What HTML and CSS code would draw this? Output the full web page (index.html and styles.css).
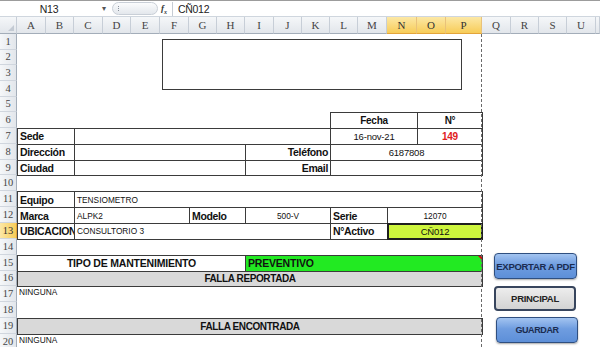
FILE: index.html
```html
<!DOCTYPE html>
<html lang="es">
<head>
<meta charset="utf-8">
<title>Hoja de mantenimiento</title>
<link rel="stylesheet" href="styles.css">
</head>
<body>
<div class="fbar">
  <div class="namebox">N13</div>
  <div class="nb-arrow">&#9662;</div>
  <div class="pill"><span class="grip"></span></div>
  <div class="fx">f<sub>x</sub></div>
  <div class="fsep"></div>
  <div class="formula">CÑ012</div>
</div>
<div class="sheet">
  <div class="ch corner"><span class="tri"></span></div>
  <div class="ch">A</div><div class="ch">B</div><div class="ch">C</div><div class="ch">D</div>
  <div class="ch">E</div><div class="ch">F</div><div class="ch">G</div><div class="ch">H</div>
  <div class="ch">I</div><div class="ch">J</div><div class="ch">K</div><div class="ch">L</div>
  <div class="ch">M</div><div class="ch hl">N</div><div class="ch hl">O</div><div class="ch hl">P</div>
  <div class="ch">Q</div><div class="ch">R</div><div class="ch">S</div><div class="ch">U</div>
  <div class="ch"></div>

  <div class="rh r1">1</div><div class="rh r2">2</div><div class="rh r3">3</div><div class="rh r4">4</div>
  <div class="rh r5">5</div><div class="rh r6">6</div><div class="rh r7">7</div><div class="rh r8">8</div>
  <div class="rh r9">9</div><div class="rh r10">10</div><div class="rh r11">11</div><div class="rh r12">12</div>
  <div class="rh r13 hl">13</div><div class="rh r14">14</div><div class="rh r15">15</div><div class="rh r16">16</div>
  <div class="rh r17">17</div><div class="rh r18">18</div><div class="rh r19">19</div><div class="rh r20">20</div>

  <div class="c b r6 cLN ctr lbl sm">Fecha</div>
  <div class="c b r6 cOP ctr lbl sm">N°</div>

  <div class="c b r7 cAB lbl">Sede</div>
  <div class="c b r7 cCK"></div>
  <div class="c b r7 cLN ctr val">16-nov-21</div>
  <div class="c b r7 cOP ctr lbl sm red">149</div>

  <div class="c b r8 cAB lbl">Dirección</div>
  <div class="c b r8 cCH"></div>
  <div class="c b r8 cIK rt lbl">Teléfono</div>
  <div class="c b r8 cLP ctr val">6187808</div>

  <div class="c b r9 cAB lbl">Ciudad</div>
  <div class="c b r9 cCH"></div>
  <div class="c b r9 cIK rt lbl">Email</div>
  <div class="c b r9 cLP"></div>

  <div class="c b r11 cAB lbl">Equipo</div>
  <div class="c b r11 cCP data">TENSIOMETRO</div>

  <div class="c b r12 cAB lbl">Marca</div>
  <div class="c b r12 cCF data">ALPK2</div>
  <div class="c b r12 cGH lbl">Modelo</div>
  <div class="c b r12 cIK ctr data">500-V</div>
  <div class="c b r12 cLM lbl">Serie</div>
  <div class="c b r12 cNP ctr data">12070</div>

  <div class="c b r13 cAB lbl">UBICACION</div>
  <div class="c b r13 cCK data">CONSULTORIO 3</div>
  <div class="c b r13 cLM lbl">N°Activo</div>
  <div class="c b r13 cNP ctr val lime sel">CÑ012</div>

  <div class="c b r15 cAH ctr lbl big">TIPO DE MANTENIMIENTO</div>
  <div class="c b r15 cIP lbl big green">PREVENTIVO</div>

  <div class="c b r16 cAP ctr lbl head gray">FALLA REPORTADA</div>
  <div class="c r17 cAP data top">NINGUNA</div>
  <div class="c b r19 cAP ctr lbl head gray">FALLA ENCONTRADA</div>
  <div class="c r20 cAP data top">NINGUNA</div>

  <div class="logo"></div>
  <div class="pb"></div>

  <button class="btn blue export" type="button">EXPORTAR A PDF</button>
  <button class="btn principal" type="button">PRINCIPAL</button>
  <button class="btn blue guardar" type="button">GUARDAR</button>
</div>
</body>
</html>
```
FILE: styles.css
```css
* { box-sizing: border-box; margin: 0; padding: 0; }
html, body { width: 600px; height: 347px; overflow: hidden; background: #fff; }
body { font-family: "Liberation Sans", Arial, sans-serif; color: #111; }

/* formula bar */
.fbar { height: 17px; display: flex; align-items: center; border-top: 1px solid #9c9c9c; border-bottom: 1px solid #cfd6de; background: #fff; }
.namebox { width: 98px; text-align: center; font-size: 10.5px; letter-spacing: -0.3px; color: #222; }
.nb-arrow { width: 12px; font-size: 8px; color: #555; text-align: center; }
.pill { width: 46px; height: 13px; margin-left: 2px; border: 1px solid #c9cfd7; border-radius: 7px; background: linear-gradient(#fbfcfd, #e3e7ec); display: flex; align-items: center; padding-left: 5px; }
.grip { width: 2px; height: 5px; border-left: 1px dotted #8a929c; }
.fx { width: 12px; font: italic bold 9px "Liberation Serif", serif; color: #333; text-align: center; }
.fx sub { font-size: 6px; }
.fsep { width: 1px; height: 14px; background: #c6ccd4; margin: 0 5px 0 2px; }
.formula { font-size: 10.5px; letter-spacing: -0.3px; color: #222; }

/* sheet grid */
.sheet {
  position: relative;
  display: grid;
  grid-template-columns: 17px 29px 28px 29px 28px 29px 29px 28px 28px 29px 28px 28px 28px 29px 30px 29px 36px 29px 28px 28px 29px 1fr;
  grid-template-rows: 17px repeat(6, 15.67px) repeat(14, 15.85px);
  height: 330px;
  overflow: hidden;
}
.ch { grid-row: 1; display: flex; align-items: center; justify-content: center; background: linear-gradient(#f5f7f9, #e2e6eb); border-right: 1px solid #c7ced7; border-bottom: 1px solid #a3adb9; font: 11px "Liberation Serif", serif; color: #444; }
.ch.hl { background: linear-gradient(#fce8a6, #f7cc58); border-bottom-color: #e3a43a; border-right-color: #e9c27a; color: #333; }
.corner { position: relative; }
.tri { position: absolute; right: 2px; bottom: 2px; border-bottom: 6px solid #c3cad3; border-left: 6px solid transparent; }
.rh { grid-column: 1; display: flex; align-items: center; justify-content: center; background: linear-gradient(90deg, #f5f7f9, #e2e6eb); border-right: 1px solid #a3adb9; border-bottom: 1px solid #d0d6de; font: 10.5px "Liberation Serif", serif; color: #454545; }
.rh.hl { background: linear-gradient(90deg, #fce8a6, #f7cc58); border-right-color: #e3a43a; color: #333; }

.r1 { grid-row: 2; } .r2 { grid-row: 3; } .r3 { grid-row: 4; } .r4 { grid-row: 5; }
.r5 { grid-row: 6; } .r6 { grid-row: 7; } .r7 { grid-row: 8; } .r8 { grid-row: 9; }
.r9 { grid-row: 10; } .r10 { grid-row: 11; } .r11 { grid-row: 12; } .r12 { grid-row: 13; }
.r13 { grid-row: 14; } .r14 { grid-row: 15; } .r15 { grid-row: 16; } .r16 { grid-row: 17; }
.r17 { grid-row: 18; } .r18 { grid-row: 19; } .r19 { grid-row: 20; } .r20 { grid-row: 21; }

.cAB { grid-column: 2 / 4; }
.cCK { grid-column: 4 / 13; }
.cLN { grid-column: 13 / 16; }
.cOP { grid-column: 16 / 18; }
.cCH { grid-column: 4 / 10; }
.cIK { grid-column: 10 / 13; }
.cLP { grid-column: 13 / 18; }
.cCP { grid-column: 4 / 18; }
.cCF { grid-column: 4 / 8; }
.cGH { grid-column: 8 / 10; }
.cLM { grid-column: 13 / 15; }
.cNP { grid-column: 15 / 18; }
.cAH { grid-column: 2 / 10; }
.cIP { grid-column: 10 / 18; }
.cAP { grid-column: 2 / 18; }

.c { display: flex; align-items: center; overflow: hidden; white-space: nowrap; padding: 0 2px; font-size: 8.3px; }
.b { border: 1px solid #3b3b3b; margin: 0 -1px -1px 0; }
.ctr { justify-content: center; }
.rt { justify-content: flex-end; }
.top { align-items: flex-start; padding-top: 1px; }
.lbl { font-weight: bold; font-size: 10.5px; letter-spacing: -0.35px; }
.lbl.sm { font-size: 10px; letter-spacing: -0.3px; }
.lbl.big { font-size: 10.5px; letter-spacing: -0.2px; }
.lbl.head { font-size: 10px; letter-spacing: -0.4px; }
.data { font-size: 8.3px; }
.val { font-size: 9.5px; letter-spacing: -0.2px; }
.red { color: #e0201c; }
.gray { background: #d9d9d9; }
.green { background: #22ea22; position: relative; }
.green::after { content: ""; position: absolute; top: 0; right: 0; border-top: 4px solid #d01010; border-left: 4px solid transparent; }
.lime { background: #cdf53d; }
.sel { border-color: #1e1e1e; box-shadow: inset 0 0 0 1px #1e1e1e; }

/* floating objects */
.logo { position: absolute; left: 162px; top: 22px; width: 300px; height: 51px; border: 1px solid #3b3b3b; background: #fff; }
.pb { position: absolute; left: 481px; top: 17px; bottom: 0; border-left: 1px dashed #6a6a6a; }

.btn { position: absolute; display: flex; align-items: center; justify-content: center; font: bold 9.5px "Liberation Sans", Arial, sans-serif; letter-spacing: -0.3px; border-radius: 4px; cursor: pointer; }
.btn.blue { background: linear-gradient(#a3c4f0, #6f9de0 45%, #5d8fd8); border: 1.5px solid #2f4f80; color: #1b2c50; box-shadow: 0 1px 2px rgba(0, 0, 0, 0.35); }
.export { left: 494px; top: 236px; width: 83px; height: 26px; }
.principal { left: 494px; top: 269px; width: 82px; height: 25px; background: linear-gradient(#ededed, #d3d3d3); border: 2px solid #37455d; color: #222; }
.guardar { left: 496px; top: 300px; width: 82px; height: 26px; font-size: 9px; letter-spacing: -0.4px; }
```
